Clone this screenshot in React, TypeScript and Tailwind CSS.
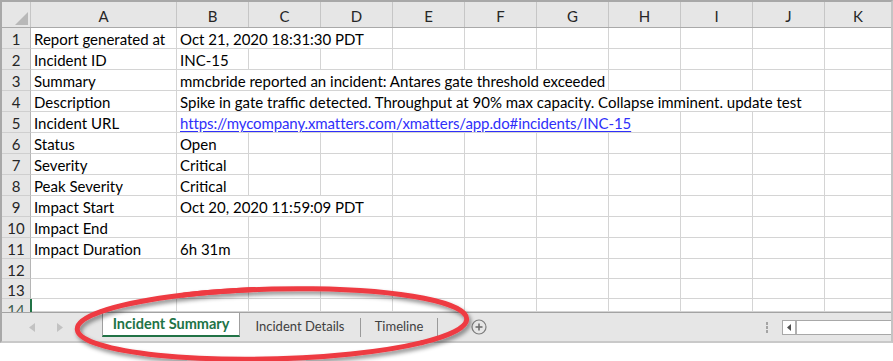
import React from "react";

const FONT = { fontFamily: "Lato, 'Noto Sans', sans-serif" };

type RowDef = { a: string; b: React.ReactNode; span: number };

const rows: RowDef[] = [
  { a: "Report generated at", b: "Oct 21, 2020 18:31:30 PDT", span: 3 },
  { a: "Incident ID", b: "INC-15", span: 1 },
  { a: "Summary", b: "mmcbride reported an incident: Antares gate threshold exceeded", span: 6 },
  {
    a: "Description",
    b: "Spike in gate traffic detected. Throughput at 90% max capacity. Collapse imminent. update test",
    span: 9,
  },
  {
    a: "Incident URL",
    b: (
      <span className="text-[#2f2ffa] underline underline-offset-[2px] tracking-[-0.1px]">
        https://mycompany.xmatters.com/xmatters/app.do#incidents/INC-15
      </span>
    ),
    span: 7,
  },
  { a: "Status", b: "Open", span: 1 },
  { a: "Severity", b: "Critical", span: 1 },
  { a: "Peak Severity", b: "Critical", span: 1 },
  { a: "Impact Start", b: "Oct 20, 2020 11:59:09 PDT", span: 3 },
  { a: "Impact End", b: "", span: 1 },
  { a: "Impact Duration", b: "6h 31m", span: 1 },
  { a: "", b: "", span: 1 },
  { a: "", b: "", span: 1 },
  { a: "", b: "", span: 1 },
];

const spanW: Record<number, string> = {
  1: "w-[72px]",
  3: "w-[216px]",
  6: "w-[432px]",
  7: "w-[504px]",
  9: "w-[648px]",
};

const letters = ["B", "C", "D", "E", "F", "G", "H", "I", "J"];

function Row({ r, i }: { r: RowDef; i: number }) {
  const h = i < 11 ? "h-[21px]" : i < 13 ? "h-[20px]" : "h-[13px]";
  const last = i === 13;
  const rest = Array.from({ length: 9 - r.span });
  return (
    <div className={`flex ${h} shrink-0 overflow-hidden text-[15px] text-black`}>
      <div
        className={`relative w-[29px] shrink-0 bg-[#e6e6e6] border-r border-r-[#b5b5b5] ${
          last ? "" : "border-b border-b-[#cfcfcf]"
        } flex justify-center items-start pt-[2px] leading-[18px] ${last ? "text-[#3b5c4c]" : "text-[#262626]"}`}
      >
        {i + 1}
        {last && <div className="absolute right-[-2px] top-0 h-full w-[2px] bg-[#217346]" />}
      </div>
      <div className="w-[146px] shrink-0 border-r border-b border-[#d4d4d4] pl-[3px] pt-[2px] leading-[18px] whitespace-nowrap">
        {r.a}
      </div>
      <div
        className={`${spanW[r.span]} shrink-0 border-r border-b border-[#d4d4d4] pl-[3px] pt-[2px] leading-[18px] whitespace-nowrap`}
      >
        {r.b}
      </div>
      {rest.map((_, k) => (
        <div key={k} className="w-[72px] shrink-0 border-r border-b border-[#d4d4d4]" />
      ))}
      <div className="flex-1 border-b border-[#d4d4d4]" />
    </div>
  );
}

function Header() {
  return (
    <div className="flex h-[26px] shrink-0 bg-[#e6e6e6] border-b border-b-[#a9a9a9] text-[15px] text-[#262626]">
      <div className="relative w-[29px] shrink-0 border-r border-r-[#c6c6c6]">
        <svg className="absolute left-[13px] top-[10px]" width="13" height="13" viewBox="0 0 13 13">
          <polygon points="13,0 13,13 0,13" fill="#b8b8b8" />
        </svg>
      </div>
      <div className="w-[146px] shrink-0 border-r border-r-[#c6c6c6] flex justify-center items-end pb-[1px] leading-[20px]">
        A
      </div>
      {letters.map((l) => (
        <div
          key={l}
          className="w-[72px] shrink-0 border-r border-r-[#c6c6c6] flex justify-center items-end pb-[1px] leading-[20px]"
        >
          {l}
        </div>
      ))}
      <div className="flex-1 flex justify-center items-end pb-[1px] leading-[20px]">K</div>
    </div>
  );
}

function TabBar() {
  return (
    <div className="flex h-[29px] shrink-0 border-t border-t-[#a3a3a3] bg-[#e6e6e6] items-start">
      <div className="w-[100px] shrink-0 h-[28px] flex items-center pl-[27px] gap-[22px]">
        <svg width="6" height="9" viewBox="0 0 6 9">
          <polygon points="6,0 6,9 0,4.5" fill="#c2c2c2" />
        </svg>
        <svg width="6" height="9" viewBox="0 0 6 9">
          <polygon points="0,0 0,9 6,4.5" fill="#c2c2c2" />
        </svg>
      </div>
      <div className="w-[138px] shrink-0 h-[24px] bg-white border-x border-x-[#9f9f9f] border-b-2 border-b-[#217346] flex items-center justify-center text-[14.5px] font-bold text-[#217346]">
        Incident Summary
      </div>
      <div className="w-[120px] shrink-0 h-[27px] flex items-center justify-center text-[13px] text-[#404040]">
        Incident Details
      </div>
      <div className="w-px h-[19px] mt-[5px] bg-[#9a9a9a] shrink-0" />
      <div className="w-[76px] shrink-0 h-[27px] flex items-center justify-center text-[13px] text-[#404040]">
        Timeline
      </div>
      <div className="w-px h-[19px] mt-[5px] bg-[#9a9a9a] shrink-0" />
      <div className="ml-[33px] mt-[6px] shrink-0">
        <svg width="16" height="16" viewBox="0 0 16 16">
          <circle cx="8" cy="8" r="7" fill="none" stroke="#7c7c7c" strokeWidth="1.2" />
          <line x1="4.5" y1="8" x2="11.5" y2="8" stroke="#6e6e6e" strokeWidth="1.6" />
          <line x1="8" y1="4.5" x2="8" y2="11.5" stroke="#6e6e6e" strokeWidth="1.6" />
        </svg>
      </div>
      <div className="flex-1" />
      <div className="mt-[9px] flex flex-col gap-[1px] shrink-0">
        <div className="w-[2px] h-[3px] bg-[#a4a4a4]" />
        <div className="w-[2px] h-[3px] bg-[#a4a4a4]" />
        <div className="w-[2px] h-[3px] bg-[#a4a4a4]" />
      </div>
      <div className="ml-[14px] mt-[7px] w-[109px] h-[15px] shrink-0 border border-[#a8a8a8] border-r-0 bg-white flex">
        <div className="w-[14px] h-full flex items-center justify-center border-r-2 border-r-[#b0b0b0]">
          <svg width="4" height="7" viewBox="0 0 4 7">
            <polygon points="4,0 4,7 0,3.5" fill="#505050" />
          </svg>
        </div>
      </div>
    </div>
  );
}

function RedCircle() {
  return (
    <svg className="absolute left-0 top-0 pointer-events-none" width="893" height="361" viewBox="0 0 893 361">
      <defs>
        <filter id="sh" x="-10%" y="-40%" width="120%" height="180%">
          <feGaussianBlur in="SourceAlpha" stdDeviation="2" />
          <feOffset dx="2" dy="3" result="b" />
          <feColorMatrix in="b" type="matrix" values="0 0 0 0 0  0 0 0 0 0  0 0 0 0 0  0 0 0 0.45 0" result="s" />
          <feMerge>
            <feMergeNode in="s" />
            <feMergeNode in="SourceGraphic" />
          </feMerge>
        </filter>
      </defs>
      <g filter="url(#sh)" fill="none" stroke="#ee3a43" strokeLinecap="round">
        <g transform="rotate(-1.5 272 324)">
          <path d="M 184 292.8 A 195 35 0 0 1 421.4 346.5" strokeWidth="5" />
          <path d="M 421.4 346.5 A 195 35 0 1 1 255 289.1" strokeWidth="5" />
        </g>
      </g>
    </svg>
  );
}

export default function App() {
  return (
    <div className="relative w-[893px] h-[361px] bg-white overflow-hidden" style={FONT}>
      <div className="w-[893px] h-[343px] flex flex-col border-t-2 border-l-2 border-t-[#a8a8a8] border-l-[#a8a8a8] border-r-2 border-r-[#c4c4c4] border-b-2 border-b-[#c9c9c9] bg-white">
        <Header />
        {rows.map((r, i) => (
          <Row key={i} r={r} i={i} />
        ))}
        <TabBar />
      </div>
      <RedCircle />
    </div>
  );
}
